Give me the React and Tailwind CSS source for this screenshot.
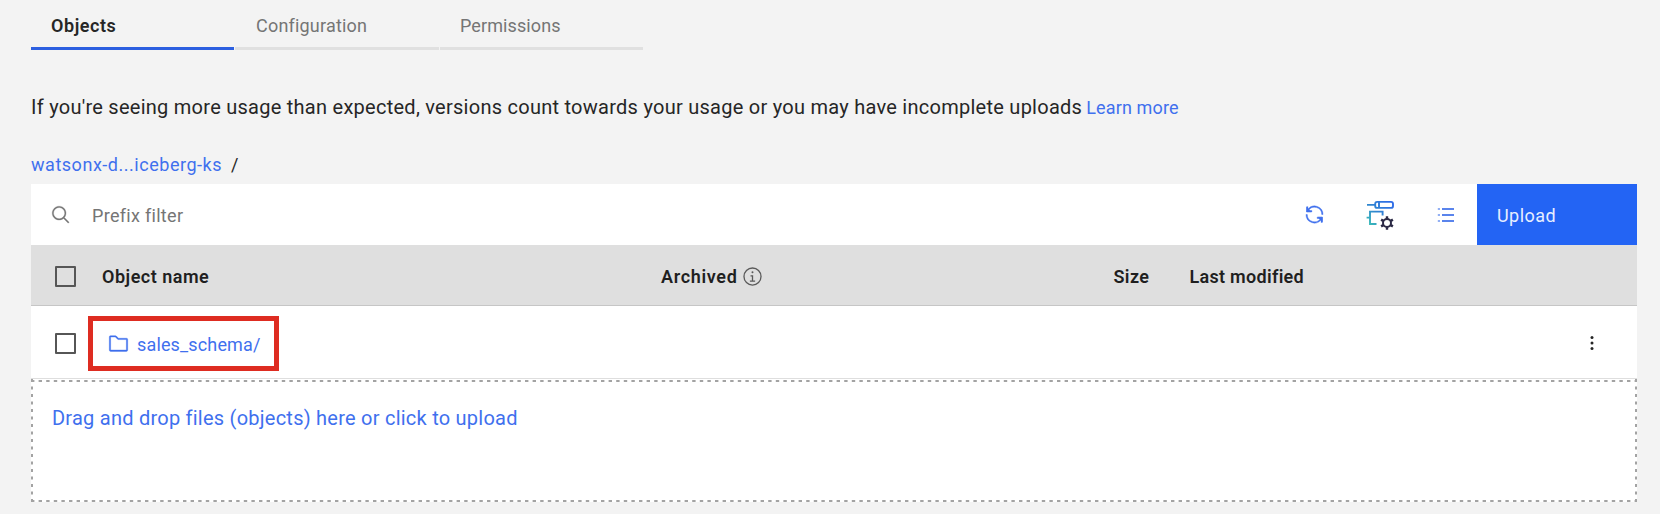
const tabs = [
  { label: 'Objects', box: 'w-[203px] border-[#2c5fe0] font-semibold text-[#262626] tracking-[0.55px] pl-[20px]' },
  { label: 'Configuration', box: 'w-[204px] border-[#e0e0e0] text-[#757575] tracking-[0.2px] pl-[21px]' },
  { label: 'Permissions', box: 'w-[203px] border-[#e0e0e0] text-[#757575] tracking-[0.1px] pl-[20px]' },
];

function SearchIcon() {
  return (
    <svg viewBox="0 0 32 32" className="size-5 shrink-0" fill="#757575" stroke="#757575" strokeWidth="0.5">
      <path d="M29,27.586l-7.552-7.552a11.018,11.018,0,1,0-1.414,1.414L27.586,29ZM4,13a9,9,0,1,1,9,9A9.01,9.01,0,0,1,4,13Z" />
    </svg>
  );
}

function RenewIcon() {
  return (
    <svg viewBox="0 0 32 32" className="size-[21px]" fill="#3f70ee" stroke="#3f70ee" strokeWidth="0.6">
      <path d="M12,10H6.78A11,11,0,0,1,27,16h2A13,13,0,0,0,6,7.68V4H4v8h8Z" />
      <path d="M20,22h5.22A11,11,0,0,1,5,16H3a13,13,0,0,0,23,8.32V28h2V20H20Z" />
      <path d="M4 5V12H11ZM28 27V20H21Z" />
    </svg>
  );
}

function PolicyIcon() {
  return (
    <svg viewBox="0 0 30 32" className="h-8 w-[30px] overflow-visible" fill="none">
      <defs>
        <linearGradient id="flow" x1="2" y1="26" x2="26" y2="2" gradientUnits="userSpaceOnUse">
          <stop offset="0" stopColor="#3cc3b4" />
          <stop offset="0.45" stopColor="#2f86cf" />
          <stop offset="1" stopColor="#2f6be8" />
        </linearGradient>
      </defs>
      <g stroke="url(#flow)" strokeWidth="1.9">
        <rect x="10.2" y="2.9" width="17.8" height="6" rx="2" />
        <path d="M2 5.91H10.2M14 3v6M17.6 16.4V12.6H5V25H11.5M1.6 18.61H5" />
      </g>
      <g stroke="#2b2945">
        <circle cx="22" cy="24" r="4" strokeWidth="2" />
        <path
          d="M22 17.2v2.6M22 28.2v2.6M16.1 20.6l2.2 1.3M25.7 26.1l2.2 1.3M16.1 27.4l2.2-1.3M25.7 21.9l2.2-1.3"
          strokeWidth="2.4"
        />
      </g>
    </svg>
  );
}

function ListIcon() {
  return (
    <svg viewBox="0 0 18 18" className="size-[18px]">
      <path d="M5 3H17M5 9H17M5 15H17" stroke="#5a84ec" strokeWidth="2" />
      <path d="M0.8 3H3M0.8 9H3M0.8 15H3" stroke="#93b0f4" strokeWidth="2" />
    </svg>
  );
}

function InfoIcon() {
  return (
    <svg viewBox="0 0 32 32" className="size-[21px]" fill="#5a5a5a">
      <path d="M17 22V14H13v2h2v6H12v2h8V22ZM16,8a1.5,1.5,0,1,0,1.5,1.5A1.5,1.5,0,0,0,16,8Z" />
      <path d="M16,30A14,14,0,1,1,30,16,14,14,0,0,1,16,30ZM16,4A12,12,0,1,0,28,16,12,12,0,0,0,16,4Z" />
    </svg>
  );
}

function FolderIcon() {
  return (
    <svg viewBox="0 0 32 32" className="size-[21px]" fill="#3f70ee" stroke="#3f70ee" strokeWidth="0.6">
      <path d="M11.17,6l3.42,3.41.58.59H28V26H4V6h7.17m0-2H4A2,2,0,0,0,2,6V26a2,2,0,0,0,2,2H28a2,2,0,0,0,2-2V10a2,2,0,0,0-2-2H16L12.59,4.59A2,2,0,0,0,11.17,4Z" />
    </svg>
  );
}

function Checkbox() {
  return <div className="size-[21px] shrink-0 rounded-[1px] border-2 border-[#565656]" />;
}

export default function App() {
  return (
    <div className="h-[514px] w-[1660px] overflow-hidden bg-[#f3f3f3] pl-[31px] pr-[23px] font-['Roboto',sans-serif] text-[18px] leading-6 whitespace-nowrap text-[#262626]">
      <nav className="flex h-[50px] gap-px">
        {tabs.map((t) => (
          <div key={t.label} className={`border-b-[3px] pt-[14px] ${t.box}`}>
            {t.label}
          </div>
        ))}
      </nav>

      <p className="mt-[45px] flex h-6 items-baseline text-[20px] tracking-[0.26px]">
        If you're seeing more usage than expected, versions count towards your usage or you may have incomplete uploads
        <a className="ml-[4px] text-[18px] tracking-[0.15px] text-[#3f70ee]">Learn more</a>
      </p>

      <div className="mt-[34px] flex h-[31px]">
        <a className="tracking-[0.53px] text-[#3f70ee]">watsonx-d...iceberg-ks</a>
        <span className="ml-[9px]">/</span>
      </div>

      <div className="flex h-[61px] items-center bg-white pl-[20px]">
        <SearchIcon />
        <span className="ml-[21px] flex-1 pt-[2px] tracking-[0.3px] text-[#757575]">Prefix filter</span>
        <RenewIcon />
        <div className="ml-[40px]">
          <PolicyIcon />
        </div>
        <div className="ml-[42px]">
          <ListIcon />
        </div>
        <button className="ml-[22px] h-full w-[160px] bg-[#2364f4] pt-[2px] pl-[20px] text-left tracking-[0.45px] text-[#e6eeff]">
          Upload
        </button>
      </div>

      <div className="flex h-[61px] items-center border-b border-[#c6c6c6] bg-[#dfdfdf] pt-[2px] pl-[24px] font-semibold text-[#1f1f1f]">
        <Checkbox />
        <span className="ml-[26px] w-[559px] pt-px tracking-[0.5px]">Object name</span>
        <span className="pt-px tracking-[0.66px]">Archived</span>
        <div className="ml-[5px] w-[371px]">
          <InfoIcon />
        </div>
        <span className="w-[76px] pt-px tracking-[0.4px]">Size</span>
        <span className="pt-px tracking-[0.3px]">Last modified</span>
      </div>

      <div className="flex h-[73px] items-center border-b border-[#dedede] bg-white pt-[2px] pl-[24px]">
        <Checkbox />
        <div className="ml-[12px] flex h-[55px] w-[191px] items-center border-[5px] border-[#de2c21] pl-[15px]">
          <FolderIcon />
          <a className="ml-[8px] pt-[3px] tracking-[0.15px] text-[#3f70ee]">sales_schema/</a>
        </div>
        <svg viewBox="0 0 4 16" className="mr-[43px] ml-auto h-4 w-1" fill="#262626">
          <circle cx="2" cy="2.6" r="1.5" />
          <circle cx="2" cy="8" r="1.5" />
          <circle cx="2" cy="13.4" r="1.5" />
        </svg>
      </div>

      <div className="relative h-[123px] bg-white pt-[27px] pl-[21px] text-[20px] tracking-[0.24px] text-[#3f70ee]">
        Drag and drop files (objects) here or click to upload
        <svg className="absolute inset-0 h-full w-full" fill="none" stroke="#a3a3a3" strokeWidth="2">
          <path d="M0 2H1606M0 122H1606" strokeDasharray="3.4 4.2" />
          <path d="M1 0V123M1605 0V123" strokeDasharray="3 4.5" />
        </svg>
      </div>
    </div>
  );
}
